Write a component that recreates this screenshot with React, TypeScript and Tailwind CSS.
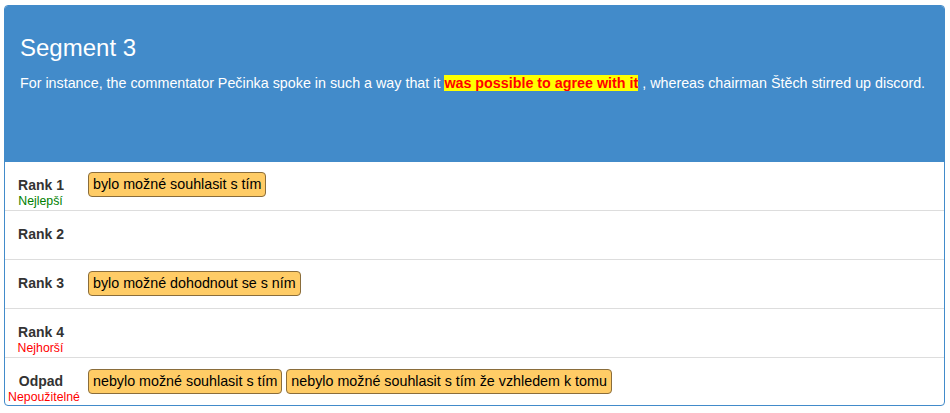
import React from 'react';

type Row = {
  rank: string;
  note?: string;
  noteColor?: string;
  chips: string[];
};

const rows: Row[] = [
  { rank: 'Rank 1', note: 'Nejlepší', noteColor: 'text-[#008000]', chips: ['bylo možné souhlasit s tím'] },
  { rank: 'Rank 2', chips: [] },
  { rank: 'Rank 3', chips: ['bylo možné dohodnout se s ním'] },
  { rank: 'Rank 4', note: 'Nejhorší', noteColor: 'text-[#ff0000]', chips: [] },
  {
    rank: 'Odpad',
    note: 'Nepoužitelné',
    noteColor: 'text-[#ff0000]',
    chips: ['nebylo možné souhlasit s tím', 'nebylo možné souhlasit s tím že vzhledem k tomu'],
  },
];

const Chip = ({ text }: { text: string }) => (
  <span className="inline-block rounded-[4px] border border-[#8a6d3b] bg-[#ffcc66] px-[4px] py-[3px] text-[14.3px] leading-[17px] text-black">
    {text}
  </span>
);

export default function App() {
  return (
    <div className="min-h-[413px] bg-white pt-[5px] pl-[4px] font-['Liberation_Sans',Arial,sans-serif]">
      <div className="w-[941px] overflow-hidden rounded-[4px] border border-[#428bca]">
        <div className="h-[156px] bg-[#428bca] px-[15px] pt-[29px] text-white">
          <h3 className="text-[24px] leading-[26px]">Segment 3</h3>
          <p className="mt-[12px] text-[14.3px] leading-[20px]">
            For instance, the commentator Pečinka spoke in such a way that it{' '}
            <span className="bg-[#ffff00] font-bold text-[#ff0000]">was possible to agree with it</span> , whereas
            chairman Štěch stirred up discord.
          </p>
        </div>
        {rows.map((row, i) => {
          const last = i === rows.length - 1;
          return (
            <div key={row.rank} className={`flex ${last ? 'h-[47px]' : 'h-[49px] border-b border-[#dddddd]'}`}>
              <div className="flex w-[78px] flex-col items-center pt-[13px]">
                <span className="pr-[6px] text-[14px] font-bold leading-[20px] text-[#333333]">{row.rank}</span>
                {row.note && (
                  <span
                    className={`text-[12.3px] leading-[13px] ${row.noteColor} ${row.note === 'Nepoužitelné' ? '' : 'pr-[7px]'}`}
                  >
                    {row.note}
                  </span>
                )}
              </div>
              <div className={`flex gap-[4px] pl-[5px] ${i === 0 ? 'pt-[10px]' : 'pt-[11px]'}`}>
                {row.chips.map((c) => (
                  <div key={c}>
                    <Chip text={c} />
                  </div>
                ))}
              </div>
            </div>
          );
        })}
      </div>
    </div>
  );
}
